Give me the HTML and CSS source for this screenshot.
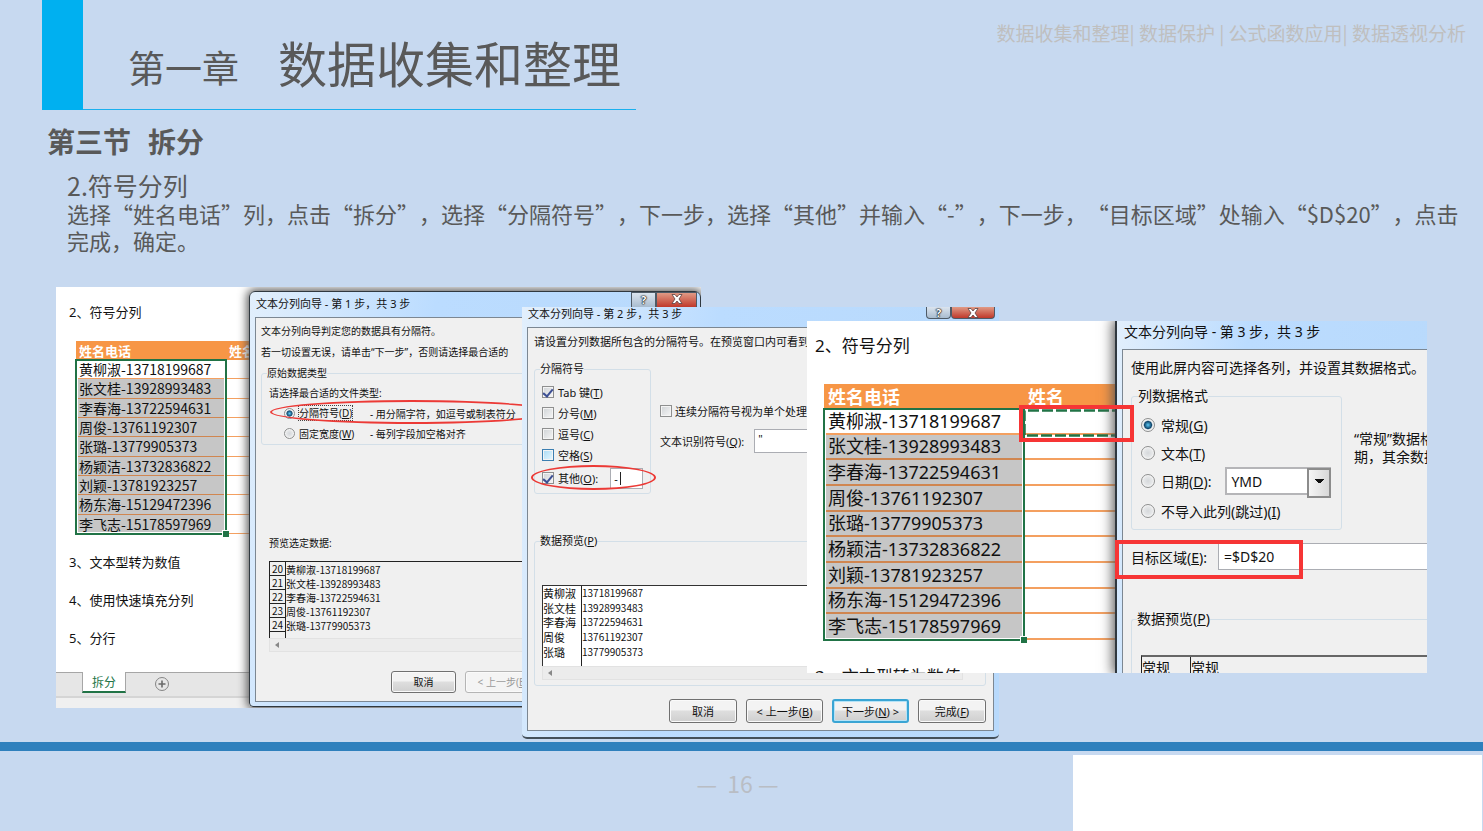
FILE: index.html
```html
<!DOCTYPE html>
<html lang="zh-CN">
<head>
<meta charset="utf-8">
<title>数据收集和整理</title>
<link rel="stylesheet" href="styles.css">
</head>
<body>
<header class="top">
  <div class="accent"></div>
  <h1 class="title"><span class="chapter">第一章</span><span class="name">数据收集和整理</span></h1>
  <p class="crumbs">数据收集和整理| 数据保护 | 公式函数应用| 数据透视分析</p>
</header>
<section class="intro">
  <h2 class="section-title"><span>第三节</span><span>拆分</span></h2>
  <div class="desc">
    <h3 class="step">2.符号分列</h3>
    <p class="body">选择“姓名电话”列，点击“拆分”，选择“分隔符号”，下一步，选择“其他”并输入“-”，下一步，“目标区域”处输入“$D$20”，点击<br>完成，确定。</p>
  </div>
</section>
<main class="stage">
  <figure class="shot shot-one">
    <div class="sheet">
      <p class="sheet-line">2、符号分列</p>
      <div class="cells">
        <table class="data">
          <thead><tr><th>姓名电话</th><th>姓名</th></tr></thead>
          <tbody>
            <tr><td>黄柳淑-13718199687</td><td></td></tr>
            <tr><td>张文桂-13928993483</td><td></td></tr>
            <tr><td>李春海-13722594631</td><td></td></tr>
            <tr><td>周俊-13761192307</td><td></td></tr>
            <tr><td>张璐-13779905373</td><td></td></tr>
            <tr><td>杨颖洁-13732836822</td><td></td></tr>
            <tr><td>刘颖-13781923257</td><td></td></tr>
            <tr><td>杨东海-15129472396</td><td></td></tr>
            <tr><td>李飞志-15178597969</td><td></td></tr>
          </tbody>
        </table>
        <div class="selection"></div>
      </div>
      <div class="topics">
        <p>3、文本型转为数值</p>
        <p>4、使用快速填充分列</p>
        <p>5、分行</p>
      </div>
      <div class="tabs">
        <button class="tab" type="button">拆分</button>
        <button class="add" type="button" aria-label="新建工作表"><svg width="16" height="16" viewBox="0 0 16 16"><circle cx="8" cy="8" r="6.5" fill="none" stroke="#858585"/><path d="M4.5 8h7M8 4.5v7" stroke="#6a6a6a" stroke-width="1.6"/></svg></button>
      </div>
      <div class="status"></div>
    </div>
    <div class="dialog">
      <div class="bar"><span>文本分列向导 - 第 1 步，共 3 步</span>
        <div class="win"><button type="button" class="help">?</button><button type="button" class="close" aria-label="关闭"><svg width="12" height="10" viewBox="0 0 12 10"><path d="M1 .5h3l2 2.500 2-2.500h3L8 5l3 4.500H8L6 7 4 9.500H1L4 5z" fill="#fff" stroke="#5b4040" stroke-width=".8"/></svg></button></div>
      </div>
      <div class="panel">
        <p class="note">文本分列向导判定您的数据具有分隔符。</p>
        <p class="note">若一切设置无误，请单击“下一步”，否则请选择最合适的</p>
        <fieldset class="group types">
          <legend>原始数据类型</legend>
          <p class="ask">请选择最合适的文件类型:</p>
          <div class="choice"><input type="radio" name="type" id="t1" checked><label for="t1"><span class="focus">分隔符号(<u>D</u>)</span></label><span>- 用分隔字符，如逗号或制表符分</span></div>
          <div class="choice"><input type="radio" name="type" id="t2"><label for="t2">固定宽度(<u>W</u>)</label><span>- 每列字段加空格对齐</span></div>
          <div class="ring ring-type"></div>
        </fieldset>
        <p class="preview-label">预览选定数据:</p>
        <div class="list">
          <table>
            <tr><th>20</th><td>黄柳淑-13718199687</td></tr>
            <tr><th>21</th><td>张文桂-13928993483</td></tr>
            <tr><th>22</th><td>李春海-13722594631</td></tr>
            <tr><th>23</th><td>周俊-13761192307</td></tr>
            <tr><th>24</th><td>张璐-13779905373</td></tr>
          </table>
          <div class="rest"></div>
        </div>
        <div class="scroll"><i></i></div>
        <div class="actions"><button type="button">取消</button><button type="button" disabled>&lt; 上一步(<u>B</u>)</button></div>
      </div>
    </div>
  </figure>

  <figure class="shot shot-two">
    <div class="dialog">
      <div class="bar"><span>文本分列向导 - 第 2 步，共 3 步</span>
        <div class="win"><button type="button" class="help">?</button><button type="button" class="close" aria-label="关闭"><svg width="12" height="10" viewBox="0 0 12 10"><path d="M1 .5h3l2 2.500 2-2.500h3L8 5l3 4.500H8L6 7 4 9.500H1L4 5z" fill="#fff" stroke="#5b4040" stroke-width=".8"/></svg></button></div>
      </div>
      <div class="panel">
        <p class="note">请设置分列数据所包含的分隔符号。在预览窗口内可看到</p>
        <div class="options">
          <fieldset class="group marks">
            <legend>分隔符号</legend>
            <div class="check"><input type="checkbox" id="m1" checked><label for="m1">Tab 键(<u>T</u>)</label></div>
            <div class="check"><input type="checkbox" id="m2"><label for="m2">分号(<u>M</u>)</label></div>
            <div class="check"><input type="checkbox" id="m3"><label for="m3">逗号(<u>C</u>)</label></div>
            <div class="check"><input type="checkbox" id="m4" class="hot"><label for="m4">空格(<u>S</u>)</label></div>
            <div class="check other"><input type="checkbox" id="m5" checked><label for="m5">其他(<u>O</u>):</label><input type="text" class="box" value="-" aria-label="其他分隔符"><span class="caret"></span></div>
            <div class="ring ring-other"></div>
          </fieldset>
          <div class="extra">
            <div class="check"><input type="checkbox" id="m6"><label for="m6">连续分隔符号视为单个处理</label></div>
            <div class="quote"><label for="q">文本识别符号(<u>Q</u>):</label><input id="q" type="text" class="box" value="&quot;"></div>
          </div>
        </div>
        <fieldset class="group preview">
          <legend>数据预览(<u>P</u>)</legend>
          <div class="list">
            <table>
              <tr><th>黄柳淑</th><td>13718199687</td></tr>
              <tr><th>张文桂</th><td>13928993483</td></tr>
              <tr><th>李春海</th><td>13722594631</td></tr>
              <tr><th>周俊</th><td>13761192307</td></tr>
              <tr><th>张璐</th><td>13779905373</td></tr>
            </table>
            <div class="rest"></div>
          </div>
          <div class="scroll"><i></i></div>
        </fieldset>
        <div class="actions"><button type="button">取消</button><button type="button" class="wide">&lt; 上一步(<u>B</u>)</button><button type="button" class="wide primary">下一步(<u>N</u>) &gt;</button><button type="button">完成(<u>F</u>)</button></div>
      </div>
    </div>
  </figure>

  <figure class="shot shot-three">
    <div class="sheet">
      <p class="sheet-line">2、符号分列</p>
      <div class="cells">
        <table class="data">
          <thead><tr><th>姓名电话</th><th>姓名</th></tr></thead>
          <tbody>
            <tr><td>黄柳淑-13718199687</td><td></td></tr>
            <tr><td>张文桂-13928993483</td><td></td></tr>
            <tr><td>李春海-13722594631</td><td></td></tr>
            <tr><td>周俊-13761192307</td><td></td></tr>
            <tr><td>张璐-13779905373</td><td></td></tr>
            <tr><td>杨颖洁-13732836822</td><td></td></tr>
            <tr><td>刘颖-13781923257</td><td></td></tr>
            <tr><td>杨东海-15129472396</td><td></td></tr>
            <tr><td>李飞志-15178597969</td><td></td></tr>
          </tbody>
        </table>
        <div class="selection"></div>
        <svg class="ants" width="100" height="28" viewBox="0 0 100 28"><path d="M100 1.500H1.500V26.500H100" fill="none" stroke="#217346" stroke-width="2.500" stroke-dasharray="11 3"/></svg>
      </div>
      <div class="topics"><p>3、文本型转为数值</p></div>
    </div>
    <div class="dialog">
      <div class="bar"><span>文本分列向导 - 第 3 步，共 3 步</span></div>
      <div class="panel">
        <p class="note">使用此屏内容可选择各列，并设置其数据格式。</p>
        <div class="options">
          <fieldset class="group formats">
            <legend>列数据格式</legend>
            <div class="choice"><input type="radio" name="fmt" id="f1" checked><label for="f1">常规(<u>G</u>)</label></div>
            <div class="choice"><input type="radio" name="fmt" id="f2"><label for="f2">文本(<u>T</u>)</label></div>
            <div class="choice"><input type="radio" name="fmt" id="f3"><label for="f3">日期(<u>D</u>):</label><span class="picker"><select aria-label="日期格式"><option>YMD</option></select></span></div>
            <div class="choice"><input type="radio" name="fmt" id="f4"><label for="f4">不导入此列(跳过)(<u>I</u>)</label></div>
          </fieldset>
          <p class="hint">“常规”数据格<br>期，其余数据</p>
        </div>
        <div class="target"><label for="dest">目标区域(<u>E</u>):</label><input id="dest" type="text" class="box" value="=$D$20"></div>
        <fieldset class="group preview">
          <legend>数据预览(<u>P</u>)</legend>
          <div class="list"><table><tr><th>常规</th><td>常规</td></tr></table></div>
        </fieldset>
      </div>
    </div>
    <div class="frame frame-cell"></div>
    <div class="frame frame-target"></div>
  </figure>
</main>
<div class="divider"></div>
<footer class="foot">
  <p class="page">— &nbsp;16 —</p>
  <div class="blank"></div>
</footer>
</body>
</html>
```
FILE: styles.css
```css
* { box-sizing: border-box; }
body {
  margin: 0;
  min-height: 100vh;
  display: flex;
  flex-direction: column;
  background: #c7d9f0;
  color: #595959;
  font-family: "Noto Sans CJK SC", sans-serif;
  text-spacing-trim: space-all;
  overflow-x: hidden;
}
p, h1, h2, h3, figure { margin: 0; font-weight: normal; }
button, input, select { font: inherit; color: inherit; margin: 0; padding: 0; }

/* slide heading */
.top { display: flex; height: 110px; padding-left: 42px; }
.accent { width: 41px; background: #00b0f0; }
.title {
  display: flex;
  align-items: baseline;
  gap: 39px;
  width: 553px;
  padding: 26px 0 0 45px;
  line-height: 72px;
  border-bottom: 1px solid #1ab0ee;
  white-space: nowrap;
}
.chapter { font-size: 37px; }
.name { font-size: 49px; }
.crumbs { margin-left: auto; padding: 19px 17px 0 0; font-size: 19px; line-height: 28px; color: #bfbfbf; }

.intro { padding: 10px 0 33px 47px; }
.section-title { display: flex; gap: 17px; font-size: 28px; line-height: 42px; font-weight: bold; }
.desc { padding: 8px 0 0 20px; }
.step { font-size: 25px; line-height: 30px; }
.body { font-size: 22px; line-height: 27px; white-space: nowrap; }

/* overlapping captures */
.stage { position: relative; height: 455px; color: #111; }
.shot { position: absolute; overflow: hidden; }
.shot-one { left: 56px; top: 0; width: 645px; height: 421px; background: #fff; font-size: 10px; }
.shot-two { left: 522px; top: 20px; width: 477px; height: 432px; font-size: 11px; }
.shot-three { left: 807px; top: 34px; width: 620px; height: 352px; background: #fff; font-size: 14px; }

/* worksheet */
.sheet { display: flex; flex-direction: column; height: 100%; }
.sheet > * { flex: none; }
.sheet-line { font-family: "Noto Sans", "Noto Sans CJK SC", sans-serif; }
.shot-one .sheet-line { padding: 15px 0 0 13px; font-size: 13px; line-height: 20px; }
.shot-three .sheet-line { padding: 10px 0 0 8px; font-size: 17px; line-height: 30px; }
.cells { position: relative; }
.shot-one .cells { margin: 19px 0 0 20px; width: 200px; }
.shot-three .cells { margin: 23px 0 0 17px; width: 300px; }
.data { border-collapse: separate; border-spacing: 0; table-layout: fixed; width: 100%; white-space: nowrap; }
.shot-one .data { height: 193px; font-size: 14px; line-height: 14px; }
.shot-three .data { height: 256px; font-family: "Noto Sans", "Noto Sans CJK SC", sans-serif; font-size: 18px; line-height: 20px; }
.data th { padding: 0 0 0 3px; background: #f79646; color: #fff; text-align: left; font-weight: bold; }
.data td { padding: 0 0 0 3px; border-bottom: 1px solid #f4a060; }
.shot-one .data th { height: 19px; font-size: 13px; }
.shot-three .data th { height: 25px; }
.shot-one .data th:first-child { width: 150px; }
.shot-three .data th:first-child { width: 200px; }
.shot-three .data th, .shot-three .data td { padding-left: 4px; }
.shot-three .data td { border-bottom-width: 2px; }
.data tr + tr td:first-child { background: #c6c6c6; border-color: #d08650; }
.selection { position: absolute; border: 2px solid #217346; box-shadow: inset 0 0 0 1px #fff; }
.shot-one .selection { left: -1px; top: 18px; width: 152px; height: 176px; }
.shot-three .selection { left: -1px; top: 24px; width: 202px; height: 233px; }
.selection::after { content: ""; position: absolute; right: -4px; bottom: -4px; width: 6px; height: 6px; background: #217346; border: 1px solid #fff; border-width: 1px 0 0 1px; }
.ants { position: absolute; left: 199px; top: 25px; }
.topics { font-family: "Noto Sans", "Noto Sans CJK SC", sans-serif; }
.shot-one .topics { padding: 9px 0 0 13px; font-size: 13px; line-height: 38px; }
.shot-three .topics { padding: 24px 0 0 8px; font-size: 17px; line-height: 26px; white-space: nowrap; }
.tabs { display: flex; align-items: flex-start; height: 24px; margin-top: auto; padding-left: 26px; background: #e6e6e6; border-top: 1px solid #a6a6a6; }
.tab { width: 44px; height: 21px; margin-top: -1px; border: 0; border-bottom: 2px solid #217346; border-left: 1px solid #a6a6a6; border-right: 1px solid #a6a6a6; background: #fff; color: #217346; font-size: 12px; line-height: 18px; }
.add { margin: 3px 0 0 28px; width: 16px; height: 16px; border: 0; background: none; line-height: 0; }
.status { height: 12px; background: #f0f0f0; border-top: 2px solid #d5d5d5; }

/* wizard windows */
.dialog { display: flex; flex-direction: column; background: linear-gradient(100deg, #e2effc 0, #bbdcff 36%, #b8d9fb 100%); }
.shot-one .dialog { position: absolute; left: 193px; top: 4px; right: 0; bottom: 1px; border: 1px solid #30383f; border-radius: 6px 6px 4px 4px; box-shadow: 0 0 10px 2px #555; }
.shot-two .dialog { height: 100%; border-bottom: 2px solid #44505a; border-radius: 0 0 5px 5px; }
.shot-three .dialog { position: absolute; left: 308px; top: 0; right: 0; bottom: 0; border-left: 2px solid #30383f; box-shadow: 0 0 12px 2px #555; }
.bar { display: flex; flex: none; justify-content: space-between; white-space: nowrap; font-family: "Noto Sans", "Noto Sans CJK SC", sans-serif; }
.shot-one .bar { height: 25px; padding: 0 3px 0 6px; font-size: 11px; line-height: 24px; }
.shot-two .bar { height: 20px; padding: 0 4px 0 6px; font-size: 11px; line-height: 14px; }
.shot-three .bar { height: 28px; padding-left: 7px; font-size: 14px; line-height: 22px; }
.win { display: flex; }
.win button { height: 16px; border: 1px solid #4e5a66; padding: 0; line-height: 12px; overflow: hidden; }
.shot-two .win button { height: 12px; border-top: 0; line-height: 8px; border-radius: 0 0 4px 4px; }
.help { width: 25px; background: linear-gradient(#dbe4ee, #a9bccf); font-weight: bold; color: #fff; text-shadow: 0 0 1px #000, 0 0 1px #000, 0 0 2px #000; }
.close { width: 41px; background: linear-gradient(#e09a85, #c0392b); }
.shot-two .close { width: 44px; }
.panel { flex: 1; min-height: 0; background: #f0f0f0; border: 1px solid #7c8792; white-space: nowrap; font-family: "Noto Sans", "Noto Sans CJK SC", sans-serif; }
.shot-one .panel { margin: 0 5px 4px; padding: 3px 0 0 5px; }
.shot-two .panel { margin: 0 5px 6px; padding: 3px 7px 0 6px; }
.shot-three .panel { margin: 0 0 0 5px; padding: 6px 0 0 8px; border-right: 0; border-bottom: 0; }
.shot-one .note { line-height: 21px; }
.shot-two .note { line-height: 22px; }
.shot-three .note { line-height: 24px; }
.group { position: relative; min-width: 0; margin: 0; border: 1px solid #d3dfe8; border-radius: 3px; }
.group legend { padding: 0; }

input[type="radio"], input[type="checkbox"] { appearance: none; flex: none; border: 1px solid #8e8f8f; background: radial-gradient(#d5d8db, #f6f6f6); }
input[type="radio"] { width: 11px; height: 11px; border-radius: 50%; box-shadow: inset 0 0 0 1px #f4f4f4; }
input[type="radio"]:checked { background: radial-gradient(#5cc8f4 0, #12496f 42%, #e5e8ea 56%); }
input[type="checkbox"] { width: 12px; height: 12px; box-shadow: inset 0 0 0 1px #f4f4f4; background: linear-gradient(135deg, #cfd3d6, #f6f6f6); display: grid; place-items: center; }
input[type="checkbox"]:checked::after { content: ""; width: 4px; height: 8px; border: solid #3c4f94; border-width: 0 2px 2px 0; transform: rotate(40deg); }
input.hot { border-color: #3c7fb1; background: linear-gradient(135deg, #a9dbf5, #e8f7fe); }
.choice, .check { display: flex; align-items: center; }
.ring { position: absolute; border: 2px solid #ec3a36; border-radius: 50%; }
.box { border: 1px solid #abadb3; background: #fff; border-radius: 0; }

/* step 1 */
.types { margin-top: 3px; padding: 3px 0 1px 5px; }
.types legend { line-height: 14px; }
.ask { padding-left: 2px; line-height: 20px; }
.types .choice { height: 20px; padding-left: 17px; gap: 4px; }
.types label { width: 67px; }
.focus { display: inline-block; line-height: 14px; outline: 1px dotted #444; }
.ring-type { left: 8px; top: 20px; width: 284px; height: 24px; }
.preview-label { padding: 88px 0 0 8px; line-height: 20px; }
.list table { border-collapse: separate; border-spacing: 0; font-family: "Noto Sans CJK SC", sans-serif; }
.list th, .list td { padding: 0; font-weight: normal; text-align: left; }
.shot-one .list { margin: 8px 0 0 8px; border-top: 1px solid #222; border-left: 1px solid #222; }
.shot-one .list table { line-height: 13px; }
.shot-one .list th { width: 16px; height: 14px; padding-left: 2px; border-right: 1px solid #222; border-bottom: 1px solid #222; }
.shot-one .rest { width: 16px; height: 6px; border-right: 1px solid #222; }
.scroll { display: flex; align-items: center; height: 14px; padding-left: 5px; background: #ececec; border: 1px solid #e2e2e2; }
.scroll i { border: 3px solid transparent; border-left: 0; border-right: 4px solid #888; }
.shot-one .scroll { margin-left: 8px; }
.actions { display: flex; gap: 9px; }
.shot-one .actions { padding: 19px 0 0 130px; }
.actions button { width: 68px; height: 24px; border: 1px solid #707070; border-radius: 3px; background: linear-gradient(#f3f3f3 45%, #dedede 50%, #cfcfcf); box-shadow: inset 0 0 0 1px #fafafa; }
.shot-one .actions button { width: 65px; height: 22px; line-height: 18px; }
.shot-one .actions button:disabled { width: 76px; color: #9a9a9a; border-color: #b5b5b5; background: #f4f4f4; }
.actions .wide { width: 77px; }
.actions .primary { border: 2px solid #3aa5d4; box-shadow: inset 0 0 0 1px #b5e3f7; }

/* step 2 */
.shot-two .options { display: flex; gap: 9px; margin-top: 8px; }
.shot-two legend { line-height: 16px; }
.marks { width: 117px; height: 133px; padding: 4px 0 0 7px; }
.marks legend, .shot-two .preview legend { margin-left: -2px; }
.marks .check { height: 21px; gap: 4px; }
.marks .other { height: 26px; }
.marks .box { width: 33px; height: 21px; margin-left: 8px; padding-left: 3px; }
.caret { width: 1px; height: 13px; margin-left: -27px; background: #222; }
.ring-other { left: -4px; top: 88px; width: 125px; height: 25px; }
.extra { display: flex; flex-direction: column; gap: 10px; padding-top: 42px; flex: 1; }
.extra .check { height: 16px; gap: 3px; }
.quote { display: flex; align-items: center; gap: 10px; }
.quote .box { flex: 1; min-width: 0; height: 24px; padding: 0 0 5px 3px; }
.shot-two .preview { margin-top: 39px; padding: 36px 0 5px 7px; }
.shot-two .list { background: #fff; border-top: 1px solid #333; border-left: 1px solid #333; }
.shot-two .list table { height: 73px; line-height: 14px; }
.shot-two .list th { width: 39px; border-right: 1px solid #222; }
.shot-two .list td { font-size: 10px; }
.shot-two .rest { width: 39px; height: 7px; border-right: 1px solid #222; }
.shot-two .scroll { margin-right: 22px; }
.shot-two .actions { justify-content: flex-end; padding-top: 13px; }

/* step 3 */
.shot-three input[type="radio"] { width: 14px; height: 14px; }
.shot-three .options { display: flex; gap: 12px; margin-top: 6px; }
.shot-three legend { line-height: 20px; margin-left: 1px; }
.formats { flex: none; width: 211px; height: 144px; padding: 4px 0 0 5px; }
.formats .choice { height: 30px; gap: 6px; padding-left: 4px; }
.formats .choice:nth-of-type(2) { height: 26px; }
.picker { position: relative; width: 106px; height: 28px; margin-left: 8px; }
.picker select { appearance: none; width: 100%; height: 100%; padding-left: 4px; border: 2px solid #b5b5b8; border-radius: 0; background: #fff; }
.picker::after { content: ""; position: absolute; right: 0; top: 1px; width: 20px; height: 26px; border: 2px solid #8c8c8c; background: linear-gradient(#111, #111) 50% 9px / 9px 1px no-repeat, linear-gradient(#111, #111) 50% 10px / 7px 1px no-repeat, linear-gradient(#111, #111) 50% 11px / 5px 1px no-repeat, linear-gradient(#111, #111) 50% 12px / 3px 1px no-repeat, linear-gradient(90deg, #f5f5f5, #d8d8d8); pointer-events: none; }
.hint { padding-top: 44px; line-height: 18px; }
.target { display: flex; align-items: center; margin-top: 13px; }
.target label { width: 87px; }
.target .box { flex: 1; min-width: 0; height: 27px; padding-left: 5px; border-right: 0; }
.shot-three .preview { margin-top: 39px; padding: 26px 0 0 9px; border-right: 0; border-bottom: 0; border-top-right-radius: 0; }
.shot-three .preview legend { margin-left: -4px; }
.shot-three .list { border-top: 2px solid #666; border-left: 1px solid #222; }
.shot-three .list th { width: 49px; border-right: 1px solid #222; }
.shot-three .list table { line-height: 20px; }

.frame { position: absolute; border: 4px solid #f63535; }
.frame-cell { left: 212px; top: 84px; width: 115px; height: 37px; }
.frame-target { left: 308px; top: 219px; width: 188px; height: 39px; }

/* footer */
.divider { height: 9px; background: #2e80bd; }
.foot { position: relative; flex: 1; display: grid; grid-template-columns: 1073fr 409fr 1fr; min-height: 80px; }
.page { position: absolute; left: 0; right: 8px; top: 16px; text-align: center; font-size: 23px; line-height: 32px; color: #b9bdc4; }
.blank { grid-column: 2; margin-top: 4px; background: #fff; position: relative; }
```
